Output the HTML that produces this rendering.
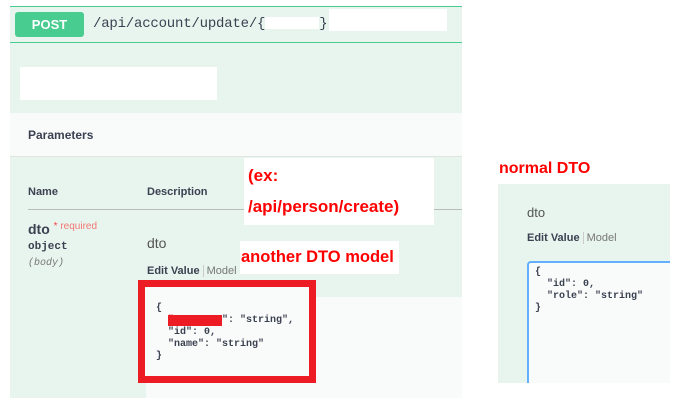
<!DOCTYPE html>
<html><head><meta charset="utf-8"><style>
*{margin:0;padding:0;box-sizing:border-box}
body{width:692px;height:405px;background:#fff;position:relative;overflow:hidden;font-family:"Liberation Sans",sans-serif}
.a{position:absolute}
.mono{font-family:"Liberation Mono","DejaVu Sans Mono",monospace}
.red{color:#f00;font-weight:bold}
</style></head><body>
<div class="a" style="left:10px;top:6px;width:452px;height:392px;background:#e8f5ee;border-top:1px solid #49cc90"></div>
<div class="a" style="left:10px;top:42px;width:452px;height:1px;background:#49cc90"></div>
<div class="a" style="left:15px;top:12px;width:69px;height:25px;background:#49cc90;border-radius:3px;color:#fff;font-weight:bold;font-size:13px;line-height:25px;text-align:center">POST</div>
<div class="a mono" style="left:93px;top:16px;font-size:14px;letter-spacing:-0.2px;color:#3b4151">/api/account/update/{<span style="display:inline-block;width:54px;height:12px;background:#fff;vertical-align:middle"></span>}</div>
<div class="a" style="left:329px;top:9px;width:118px;height:22px;background:#fff"></div>
<div class="a" style="left:20px;top:67px;width:197px;height:33px;background:#fff"></div>
<div class="a" style="left:10px;top:113px;width:452px;height:44px;background:#f9fbfa;border-bottom:1px solid #e0e5e2"></div>
<div class="a" style="left:28px;top:128px;font-size:12px;font-weight:bold;color:#3b4151">Parameters</div>
<div class="a" style="left:28px;top:186px;font-size:11px;font-weight:bold;color:#3b4151">Name</div>
<div class="a" style="left:147px;top:186px;font-size:11px;font-weight:bold;color:#3b4151">Description</div>
<div class="a" style="left:28px;top:209px;width:434px;height:1px;background:#b8bdbb"></div>
<div class="a" style="left:244px;top:158px;width:190px;height:67px;background:#fff"></div>
<div class="a red" style="left:248px;top:166px;font-size:17px">(ex:</div>
<div class="a red" style="left:248px;top:197px;font-size:17px">/api/person/create)</div>
<div class="a" style="left:28px;top:221px;font-size:14px;font-weight:bold;color:#3b4151">dto <span style="color:#f93e3e;font-size:10px;font-weight:normal;vertical-align:top">* <span style="color:#f93e3e;opacity:.7">required</span></span></div>
<div class="a mono" style="left:28px;top:241px;font-size:11px;font-weight:bold;color:#3b4151">object</div>
<div class="a mono" style="left:28px;top:258px;font-size:10px;font-style:italic;color:#777">(body)</div>
<div class="a" style="left:147px;top:235px;font-size:14px;color:#555">dto</div>
<div class="a" style="left:240px;top:241px;width:159px;height:33px;background:#fff"></div>
<div class="a red" style="left:241px;top:248px;font-size:16.5px">another DTO model</div>
<div class="a" style="left:147px;top:265px;font-size:11px;color:#3b4151"><b>Edit Value</b> <span style="border-left:1px solid #ccc;padding-left:3px;color:#777">Model</span></div>
<div class="a" style="left:146px;top:297px;width:316px;height:101px;background:#f8fbf9"></div>
<div class="a" style="left:138px;top:280px;width:178px;height:103px;border:7px solid #ed1c24;background:#f8fbf9"></div>
<div class="a mono" style="left:156px;top:303px;font-size:10px;line-height:12px;font-weight:bold;color:#3b4151;white-space:pre">{
  <span style="background:#ed1c24;color:#ed1c24">"username</span>": "string",
  "id": 0,
  "name": "string"
}</div>
<div class="a red" style="left:499px;top:160px;font-size:16px">normal DTO</div>
<div class="a" style="left:498px;top:184px;width:172px;height:199px;background:#e8f5ee"></div>
<div class="a" style="left:527px;top:205px;font-size:13px;color:#555">dto</div>
<div class="a" style="left:527px;top:232px;font-size:11px;color:#3b4151"><b>Edit Value</b> <span style="border-left:1px solid #ccc;padding-left:3px;color:#777">Model</span></div>
<div class="a" style="left:527px;top:261px;width:143px;height:122px;background:#f8fbf9;border-left:2px solid #61affe;border-top:2px solid #61affe;border-top-left-radius:4px"></div>
<div class="a mono" style="left:535px;top:267px;font-size:10px;line-height:12px;font-weight:bold;color:#3b4151;white-space:pre">{
  "id": 0,
  "role": "string"
}</div>
</body></html>
